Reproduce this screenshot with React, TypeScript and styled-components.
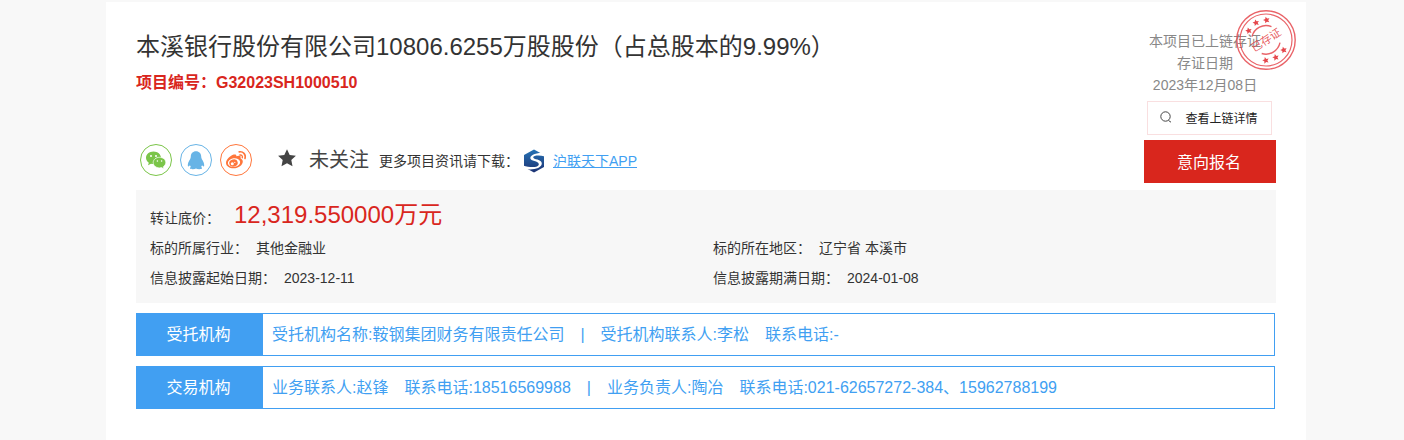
import React from "react";
import styled, { createGlobalStyle } from "styled-components";

const Global = createGlobalStyle`
  * { box-sizing: border-box; }
  body {
    margin: 0;
    background: #f8f8f8;
    color: #333;
    font: 14px/22px "Liberation Sans", "Noto Sans CJK SC", sans-serif;
  }
  button { font-family: inherit; cursor: pointer; }
  h1, p, dl, dd, dt { margin: 0; }
`;

const Page = styled.div`
  padding: 2px 0 0 8px;
`;

const Sheet = styled.main`
  max-width: 1200px;
  min-height: calc(100vh - 2px);
  margin: 0 auto;
  padding: 28px 30px 31px;
  background: #fff;
`;

const Header = styled.header`
  position: relative;
  display: flex;
  justify-content: space-between;
`;

const Summary = styled.div`
  display: flex;
  flex-direction: column;
  flex: 1;
`;

const Title = styled.h1`
  font-size: 24px;
  font-weight: 400;
  line-height: 34px;
`;

const ProjectNo = styled.p`
  margin-top: 8px;
  color: #d9261d;
  font-size: 16px;
  font-weight: 700;
  line-height: 22px;
`;

const Actions = styled.div`
  display: flex;
  align-items: center;
  margin-top: auto;
  padding: 0 0 7px 4px;
`;

const ShareList = styled.div`
  display: flex;
  gap: 8px;
`;

const ShareButton = styled.button<{ $color: string }>`
  display: flex;
  align-items: center;
  justify-content: center;
  width: 32px;
  height: 32px;
  padding: 0;
  border: 1px solid ${(p) => p.$color};
  border-radius: 50%;
  background: #fff;
  color: ${(p) => p.$color};
`;

const FollowButton = styled.button`
  display: flex;
  align-items: center;
  gap: 13px;
  margin-left: 26px;
  padding: 0;
  border: 0;
  background: none;
  color: #444;
  font-size: 20px;
  line-height: 32px;

  svg { margin-bottom: 5px; }
`;

const Download = styled.p`
  display: flex;
  align-items: center;
  gap: 4px;
  margin: 2px 0 0 10px;
`;

const AppLink = styled.a`
  margin-left: 4px;
  color: #419ff2;
`;

const Side = styled.aside`
  display: flex;
  flex-direction: column;
  align-items: center;
  gap: 5px;
  width: 132px;
`;

const Proof = styled.p`
  padding-right: 10px;
  color: #888;
  text-align: center;
  white-space: nowrap;
`;

const DetailButton = styled.button`
  display: flex;
  align-items: center;
  justify-content: center;
  gap: 13px;
  width: 125px;
  height: 34px;
  margin-right: 2px;
  padding: 0 0 2px;
  border: 1px solid #f9dfe0;
  background: #fff;
  color: #222;
  font-size: 12px;
`;

const ApplyButton = styled.button`
  width: 100%;
  height: 43px;
  padding: 0 2px 2px 0;
  border: 0;
  background: #d9261d;
  color: #fff;
  font-size: 16px;
`;

const Stamp = styled.svg`
  position: absolute;
  top: -20px;
  right: -20px;
  pointer-events: none;
`;

const Facts = styled.dl`
  display: grid;
  grid-template-columns: 1fr 1fr;
  margin-top: 7px;
  padding: 10px 0 10px 14px;
  background: #f7f7f7;
`;

const Fact = styled.div<{ $wide?: boolean }>`
  display: flex;
  align-items: baseline;
  gap: ${(p) => (p.$wide ? 14 : 8)}px;
  grid-column: ${(p) => (p.$wide ? "1 / -1" : "auto")};
  line-height: 30px;
`;

const Price = styled.dd`
  color: #d9261d;
  font-size: 24px;
  line-height: 29px;
`;

const Agency = styled.section`
  display: flex;
  margin: 10px 1px 0 0;
  border: 1px solid #419ff2;
  color: #419ff2;
  font-size: 16px;
  line-height: 41px;
`;

const AgencyLabel = styled.div`
  width: 126px;
  padding-right: 3px;
  background: #419ff2;
  color: #fff;
  text-align: center;
`;

const AgencyBody = styled.div`
  display: flex;
  gap: 16px;
  padding-left: 9px;
`;

const STAR = "M0-3.400 1-1.200 3.300-1 1.600.6 2.100 2.900 0 1.700-2.100 2.900-1.600.6-3.300-1-1-1.200Z";
const STAMP_STARS = [
  [-17.3, -9.3], [-10, -17.3], [0.5, -20], [-0.3, 20.3], [9.7, 17.3], [17.7, 10],
];

const ProofStamp = () => (
  <Stamp width="60" height="60" viewBox="-30 -30 60 60" aria-hidden="true">
    <g fill="none" stroke="#e5484d" strokeOpacity=".85">
      <circle r="29.2" strokeWidth="1.4" />
      <circle r="26" strokeWidth="1.2" />
      <path d="M-14-3.300A14.400 14.400 0 0 1 5.500-13.300" strokeWidth="1.4" />
      <path d="M14 2.700A14.400 14.400 0 0 1-4.300 13.500" strokeWidth="1.4" />
    </g>
    {STAMP_STARS.map(([x, y]) => (
      <path key={`${x},${y}`} d={STAR} fill="#e5484d" transform={`translate(${x} ${y}) rotate(-15)`} />
    ))}
    <text
      transform="rotate(-33)"
      y="4"
      textAnchor="middle"
      fontSize="11"
      fill="#e5484d"
      fillOpacity=".9"
    >
      已存证
    </text>
  </Stamp>
);

const WechatIcon = () => (
  <svg width="22" height="20" viewBox="0 0 22 20" aria-hidden="true">
    <path
      d="M8.500 1.500C4.300 1.500 1 4.300 1 7.800c0 2 1.100 3.800 2.800 4.900L3 15.200l3-1.500c.8.200 1.700.3 2.500.3 4.200 0 7.500-2.800 7.500-6.200S12.700 1.500 8.500 1.500Z"
      fill="currentColor"
    />
    <path
      d="M14.500 7.300c-3.600 0-6.300 2.400-6.300 5.300s2.700 5.300 6.300 5.300c.7 0 1.400-.1 2-.3l2.400 1.200-.6-2c1.500-1 2.500-2.500 2.500-4.200 0-2.900-2.700-5.300-6.300-5.300Z"
      fill="currentColor"
      stroke="#fff"
      strokeWidth=".7"
    />
    <g fill="#fff">
      <circle cx="6" cy="5.900" r="1" />
      <circle cx="11" cy="5.900" r="1" />
      <circle cx="12.400" cy="11" r=".8" />
      <circle cx="16.600" cy="11" r=".8" />
    </g>
  </svg>
);

const QqIcon = () => (
  <svg width="18" height="20" viewBox="0 0 18 20" fill="currentColor" aria-hidden="true">
    <path d="M9 1.200C5.800 1.200 3.800 3.500 3.800 6.600c0 1-.2 1.700-.7 2.600C1.700 11.300.8 13.400.8 15.200c0 .8.2 1.200.6 1.200.5 0 1.100-.5 1.600-1.100.2.700.5 1.200 1 1.700-.7.2-1.100.6-1.100 1 0 .8 1.200 1.200 2.900 1.200 1.400 0 2.500-.3 3.200-.8.7.5 1.800.8 3.200.8 1.700 0 2.900-.4 2.900-1.200 0-.4-.4-.8-1.100-1 .5-.5.8-1 1-1.700.5.6 1.100 1.100 1.600 1.100.4 0 .6-.4.6-1.200 0-1.800-.9-3.900-2.300-6-.5-.9-.7-1.600-.7-2.600C14.200 3.500 12.200 1.200 9 1.200Z" />
  </svg>
);

const WeiboIcon = () => (
  <svg width="22" height="20" viewBox="0 0 22 20" aria-hidden="true">
    <path
      d="M8.700 4.600c1.500-.5 2.900-.1 2.700 1.700 1.700-.6 4-.8 4.300.5.1.6-.2 1-.2 1.400.1.500 2.300.8 2.300 3.200 0 3.400-4.300 6.900-9.300 6.900C4.500 18.300 1 16 1 12.900c0-3.300 4.400-7.300 7.700-8.300Z"
      fill="currentColor"
    />
    <ellipse cx="9" cy="12.600" rx="6.200" ry="4.300" fill="#fff" transform="rotate(-8 9 12.600)" />
    <ellipse cx="8.500" cy="13" rx="4.300" ry="3.500" fill="currentColor" transform="rotate(-14 8.500 13)" />
    <circle cx="7.300" cy="13.700" r="1.500" fill="#fff" />
    <circle cx="9.800" cy="12.400" r=".6" fill="#fff" />
    <g fill="none" stroke="currentColor" strokeLinecap="round">
      <path d="M14.200 1.900c3.800-.7 7 2.400 5.800 6.600" strokeWidth="1.600" />
      <path d="M14.900 5c1.800-.2 2.900 1 2.400 2.700" strokeWidth="1.400" />
    </g>
  </svg>
);

const StarIcon = () => (
  <svg width="18" height="18" viewBox="0 0 18 18" fill="#444" aria-hidden="true">
    <path d="M9 .3 11.700 6 17.900 6.800 13.300 11.100 14.500 17.300 9 14.300 3.500 17.300 4.700 11.100.1 6.800 6.300 6Z" />
  </svg>
);

const SearchIcon = () => (
  <svg width="12" height="12" viewBox="0 0 12 12" fill="none" stroke="#444" aria-hidden="true">
    <circle cx="5.500" cy="5.500" r="4.700" />
    <path d="M8.500 9.500l2.500 1.700" />
  </svg>
);

const AppLogo = () => (
  <svg width="22" height="24" viewBox="0 0 22 24" aria-hidden="true">
    <defs>
      <linearGradient id="logo" x1="0" y1="0" x2="0" y2="1">
        <stop offset="0" stopColor="#2673b5" />
        <stop offset="1" stopColor="#1d3273" />
      </linearGradient>
    </defs>
    <path d="M11 .5 21 6v12L11 23.500 1 18V6Z" fill="url(#logo)" />
    <path
      d="M22 3.800C15 3.600 7.500 5.500 7.300 9c-.2 3.400 8.600 2.600 8.500 6.200C15.700 18.500 8 19 0 16.500v3c8 2.200 18.500.5 18.800-5C19 9.800 10 11 10.200 8.300 10.400 6.500 16 6 22 7.500Z"
      fill="#fff"
    />
  </svg>
);

export default function App() {
  return (
    <Page>
      <Global />
      <Sheet>
        <Header>
          <Summary>
            <Title>本溪银行股份有限公司10806.6255万股股份（占总股本的9.99%）</Title>
            <ProjectNo>项目编号：G32023SH1000510</ProjectNo>
            <Actions>
              <ShareList>
                <ShareButton $color="#7bc549" aria-label="微信"><WechatIcon /></ShareButton>
                <ShareButton $color="#68b4e6" aria-label="QQ"><QqIcon /></ShareButton>
                <ShareButton $color="#ff763b" aria-label="微博"><WeiboIcon /></ShareButton>
              </ShareList>
              <FollowButton><StarIcon />未关注</FollowButton>
              <Download>
                更多项目资讯请下载：
                <AppLogo />
                <AppLink href="#app">沪联天下APP</AppLink>
              </Download>
            </Actions>
          </Summary>
          <Side>
            <Proof>
              本项目已上链存证<br />存证日期<br />2023年12月08日
            </Proof>
            <DetailButton><SearchIcon />查看上链详情</DetailButton>
            <ApplyButton>意向报名</ApplyButton>
          </Side>
          <ProofStamp />
        </Header>

        <Facts>
          <Fact $wide><dt>转让底价：</dt><Price>12,319.550000万元</Price></Fact>
          <Fact><dt>标的所属行业：</dt><dd>其他金融业</dd></Fact>
          <Fact><dt>标的所在地区：</dt><dd>辽宁省 本溪市</dd></Fact>
          <Fact><dt>信息披露起始日期：</dt><dd>2023-12-11</dd></Fact>
          <Fact><dt>信息披露期满日期：</dt><dd>2024-01-08</dd></Fact>
        </Facts>

        <Agency>
          <AgencyLabel>受托机构</AgencyLabel>
          <AgencyBody>
            <span>受托机构名称:鞍钢集团财务有限责任公司</span>
            <span>|</span>
            <span>受托机构联系人:李松</span>
            <span>联系电话:-</span>
          </AgencyBody>
        </Agency>
        <Agency>
          <AgencyLabel>交易机构</AgencyLabel>
          <AgencyBody>
            <span>业务联系人:赵锋</span>
            <span>联系电话:18516569988</span>
            <span>|</span>
            <span>业务负责人:陶冶</span>
            <span>联系电话:021-62657272-384、15962788199</span>
          </AgencyBody>
        </Agency>
      </Sheet>
    </Page>
  );
}
